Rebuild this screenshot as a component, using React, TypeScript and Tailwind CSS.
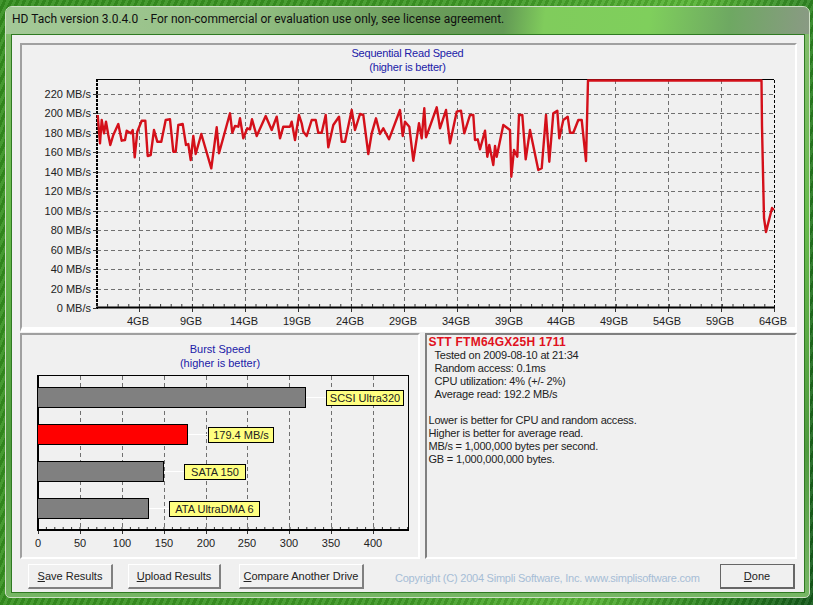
const left = [[293,345],[300,430],[305,360],[312,400],[318,365],[325,405],[331,435],[340,405],[355,372],[365,422],[375,420],[380,392],[392,400],[398,390],[404,472],[412,395],[425,362],[436,362],[443,468],[452,465],[462,390],[472,425],[484,425],[497,360],[510,358],[520,455],[527,455],[535,375],[548,372],[558,435],[565,432],[572,480],[580,408],[587,462],[604,402],[634,505],[650,382],[657,460],[690,340],[697,398],[705,378],[715,380],[720,355],[730,415],[742,385],[750,388],[756,358],[770,408],[797,348],[815,390],[830,350],[840,415],[850,380],[870,380],[875,365],[885,420],[897,345]];
const mid = [[5,190],[10,215],[20,228],[35,180],[47,180],[55,218],[65,218],[77,165],[85,262],[100,195],[117,170],[125,245],[135,245],[155,150],[165,210],[180,162],[190,165],[205,282],[215,220],[228,175],[240,222],[250,205],[267,238],[300,150],[308,228],[315,185],[328,200],[340,302],[357,190],[365,235],[373,145],[378,232],[410,142],[420,205],[438,150],[450,250],[470,155],[483,152],[493,220],[510,165],[520,165],[525,240],[533,238],[540,268],[555,212],[562,290],[568,255],[580,315],[585,258],[590,290],[610,195],[630,210],[634,350],[642,270],[652,290],[657,165],[667,165],[677,298],[690,210],[715,330],[725,325],[738,165],[748,305],[760,160],[772,152],[778,235],[790,180],[803,170],[810,218],[820,218],[835,180],[845,180],[858,303]];
const tail = [[588,80.5],[761.5,80.5],[762,126],[763,173],[764,218],[766,232],[772,208],[774,210]];

const curve = [
  ...left.map(([x, y]) => [x / 3, y / 3]),
  ...mid.map(([x, y]) => [300 + x / 3, 60 + y / 3]),
  ...tail,
].map(([x, y]) => `${x.toFixed(1)},${y.toFixed(1)}`).join(" ");

const speeds = [220, 200, 180, 160, 140, 120, 100, 80, 60, 40, 20, 0];
const gridY = [94, 113, 133, 152, 172, 191, 211, 230, 250, 269, 289, 308];
const sizes = ["4GB", "9GB", "14GB", "19GB", "24GB", "29GB", "34GB", "39GB", "44GB", "49GB", "54GB", "59GB", "64GB"];
const gridX = [139, 192, 245, 298, 351, 404, 457, 510, 562, 615, 668, 721, 774];

const bursts = [
  { end: 306, y: 387, fill: "#808080", label: "SCSI Ultra320", bx: 326, bw: 78 },
  { end: 188, y: 424, fill: "#ff0000", label: "179.4 MB/s", bx: 208, bw: 66 },
  { end: 164, y: 461, fill: "#808080", label: "SATA 150", bx: 184, bw: 62 },
  { end: 149, y: 498, fill: "#808080", label: "ATA UltraDMA 6", bx: 169, bw: 91 },
];
const burstTicks = [0, 50, 100, 150, 200, 250, 300, 350, 400];
const burstX = [38, 80, 122, 164, 206, 247, 289, 331, 373];

function SpeedChart() {
  const minor = Array.from({ length: 64 }, (_, i) => 97 + i * 10.6);
  return (
    <svg viewBox="22 74 773 251" width={773} height={251} className="block overflow-visible text-[11px] font-['Liberation_Sans',sans-serif]">
      {gridY.slice(0, -1).map((y) => (
        <line key={y} x1={97} x2={774} y1={y + 0.5} y2={y + 0.5} stroke="#707070" strokeDasharray="4 3" />
      ))}
      {gridX.slice(0, -1).map((x) => (
        <line key={x} x1={x + 0.5} x2={x + 0.5} y1={80} y2={308} stroke="#707070" strokeDasharray="4 3" />
      ))}
      <line x1={97} x2={774} y1={79.5} y2={79.5} stroke="#000" />
      <line x1={774.5} x2={774.5} y1={80} y2={308} stroke="#000" strokeDasharray="3 2" />
      <line x1={97} x2={775} y1={307.5} y2={307.5} stroke="#000" strokeWidth={2} />
      <line x1={97} x2={97} y1={79} y2={309} stroke="#000" strokeWidth={2} strokeDasharray="3 1" />
      {minor.map((x) => (
        <line key={x} x1={x} x2={x} y1={304} y2={307} stroke="#333" />
      ))}
      {gridY.map((y) => (
        <line key={y} x1={93} x2={97} y1={y + 0.5} y2={y + 0.5} stroke="#333" />
      ))}
      {gridX.map((x) => (
        <line key={x} x1={x + 0.5} x2={x + 0.5} y1={308} y2={312} stroke="#333" />
      ))}
      <polyline points={curve} fill="none" stroke="#d4101a" strokeWidth={2.4} strokeLinejoin="round" />
      {speeds.map((s, i) => (
        <text key={s} x={91} y={gridY[i] + 4} textAnchor="end" fill="#222">{s} MB/s</text>
      ))}
      {sizes.map((s, i) => (
        <text key={s} x={gridX[i] - 1} y={325} textAnchor="middle" fill="#222">{s}</text>
      ))}
    </svg>
  );
}

function BurstChart() {
  const minor = Array.from({ length: 45 }, (_, i) => 38 + i * 8.4);
  return (
    <svg viewBox="22 370 396 187" width={396} height={187} className="block text-[11px] font-['Liberation_Sans',sans-serif]">
      {burstX.slice(1).map((x) => (
        <line key={x} x1={x + 0.5} x2={x + 0.5} y1={376} y2={530} stroke="#707070" strokeDasharray="4 3" />
      ))}
      {minor.map((x) => (
        <line key={x} x1={x} x2={x} y1={527} y2={530} stroke="#333" />
      ))}
      {burstX.map((x) => (
        <line key={x} x1={x + 0.5} x2={x + 0.5} y1={530} y2={534} stroke="#333" />
      ))}
      <rect x={38.5} y={375.5} width={370} height={154} fill="none" stroke="#000" />
      <line x1={38} x2={38} y1={375} y2={531} stroke="#000" strokeWidth={2} />
      <line x1={38} x2={409} y1={530} y2={530} stroke="#000" strokeWidth={2} />
      {bursts.map((b) => (
        <g key={b.label}>
          <line x1={b.end} x2={b.bx} y1={b.y + 10.5} y2={b.y + 10.5} stroke="#fff" />
          <rect x={37.5} y={b.y + 0.5} width={b.end - 38} height={20} fill={b.fill} stroke="#000" />
          <rect x={b.bx + 0.5} y={b.y + 3.5} width={b.bw - 1} height={15} fill="#ffff80" stroke="#000" />
          <text x={b.bx + b.bw / 2} y={b.y + 15} textAnchor="middle" fill="#222">{b.label}</text>
        </g>
      ))}
      {burstTicks.map((t, i) => (
        <text key={t} x={burstX[i]} y={547} textAnchor="middle" fill="#222">{t}</text>
      ))}
    </svg>
  );
}

function Button({ first, rest, className }: { first: string; rest: string; className: string }) {
  return (
    <button className={`h-[25px] shrink-0 whitespace-nowrap bg-[#f0f0f0] border-t border-l border-t-white border-l-white border-r-2 border-b-2 border-r-[#808080] border-b-[#808080] text-[11px] text-[#222] font-['Liberation_Sans',sans-serif] ${className}`}>
      <span className="underline">{first}</span>{rest}
    </button>
  );
}

export default function App() {
  return (
    <div className="w-[813px] h-[605px] overflow-hidden pt-[6px] pl-[5px] bg-[repeating-linear-gradient(115deg,rgba(255,255,255,0.08)_0px,rgba(255,255,255,0.08)_3px,rgba(0,0,0,0.08)_3px,rgba(0,0,0,0.08)_6px),linear-gradient(100deg,#348f1e_0%,#3f9a26_55%,#58b535_75%,#2a8020_90%,#14591a_100%)]">
      <div className="w-[805px] h-[592px] rounded-t-[7px] rounded-b-[5px] border border-[#cfe0c6] overflow-hidden bg-[linear-gradient(180deg,#86bd70_0%,#68bb4c_35%,#4f9a3e_75%,#76b664_100%)] flex flex-col">
        <div className="h-[27px] shrink-0 pl-[6px] pt-[4px] text-[12px] leading-[16px] text-[#101010] whitespace-pre font-['Roboto',sans-serif] bg-[linear-gradient(96deg,#a4c998_0%,#94c084_30%,#6a9c5a_52%,#639a55_62%,#80cc5c_67%,#7fcf5c_80%,#6ea862_90%,#8a9a84_100%)]">
          HD Tach version 3.0.4.0  - For non-commercial or evaluation use only, see license agreement.
        </div>
        <div className="w-[794px] h-[559px] ml-[5px] border border-[#2f7a22] bg-[#f0f0f0] pl-[8px] pt-[8px]">
          <div className="w-[777px] h-[289px] border-t-2 border-l-2 border-r-2 border-b-[5px] border-t-[#a0a0a0] border-l-[#a0a0a0] border-r-white border-b-white">
            <div className="pt-[1px] pr-[2px] text-center text-[11px] leading-[14px] tracking-[-0.2px] text-[#2020a8] font-['Liberation_Sans',sans-serif]">
              <div>Sequential Read Speed</div>
              <div>(higher is better)</div>
            </div>
            <SpeedChart />
          </div>
          <div className="flex gap-[5px] w-[777px] mt-[1px]">
            <div className="w-[400px] h-[226px] border-t-2 border-l-2 border-r-2 border-b-2 border-t-[#a0a0a0] border-l-[#a0a0a0] border-r-white border-b-white">
              <div className="pt-[7px] text-center text-[11px] leading-[14px] text-[#2020a8] font-['Liberation_Sans',sans-serif]">
                <div>Burst Speed</div>
                <div>(higher is better)</div>
              </div>
              <BurstChart />
            </div>
            <div className="w-[372px] h-[226px] border-t-2 border-l-2 border-r-2 border-b-2 border-t-[#808080] border-l-[#808080] border-r-white border-b-white pl-[1.5px] pt-[1px] text-[11px] tracking-[-0.2px] leading-[13px] text-[#222] font-['Liberation_Sans',sans-serif]">
              <div className="font-bold text-[12px] tracking-[0.25px] text-[#e01020]">STT FTM64GX25H 1711</div>
              <div className="pl-[6px]">
                <div>Tested on 2009-08-10 at 21:34</div>
                <div>Random access: 0.1ms</div>
                <div>CPU utilization: 4% (+/- 2%)</div>
                <div>Average read: 192.2 MB/s</div>
              </div>
              <div className="mt-[13px]">
                <div>Lower is better for CPU and random access.</div>
                <div>Higher is better for average read.</div>
                <div>MB/s = 1,000,000 bytes per second.</div>
                <div>GB = 1,000,000,000 bytes.</div>
              </div>
            </div>
          </div>
          <div className="flex items-center w-[767px] ml-[8px] mt-[5px]">
            <Button first="S" rest="ave Results" className="w-[85px]" />
            <Button first="U" rest="pload Results" className="w-[93px] ml-[15px]" />
            <Button first="C" rest="ompare Another Drive" className="w-[125px] ml-[18px]" />
            <span className="ml-[31px] pt-[3px] whitespace-nowrap text-[11px] tracking-[-0.23px] text-[#a6bdd6] font-['Liberation_Sans',sans-serif]">Copyright (C) 2004 Simpli Software, Inc. www.simplisoftware.com</span>
            <button className="ml-auto w-[75px] h-[25px] shrink-0 bg-[#f0f0f0] border-t border-l border-r-2 border-b-2 border-[#666] text-[11px] text-[#222] font-['Liberation_Sans',sans-serif]">
              <span className="underline">D</span>one
            </button>
          </div>
        </div>
      </div>
    </div>
  );
}
